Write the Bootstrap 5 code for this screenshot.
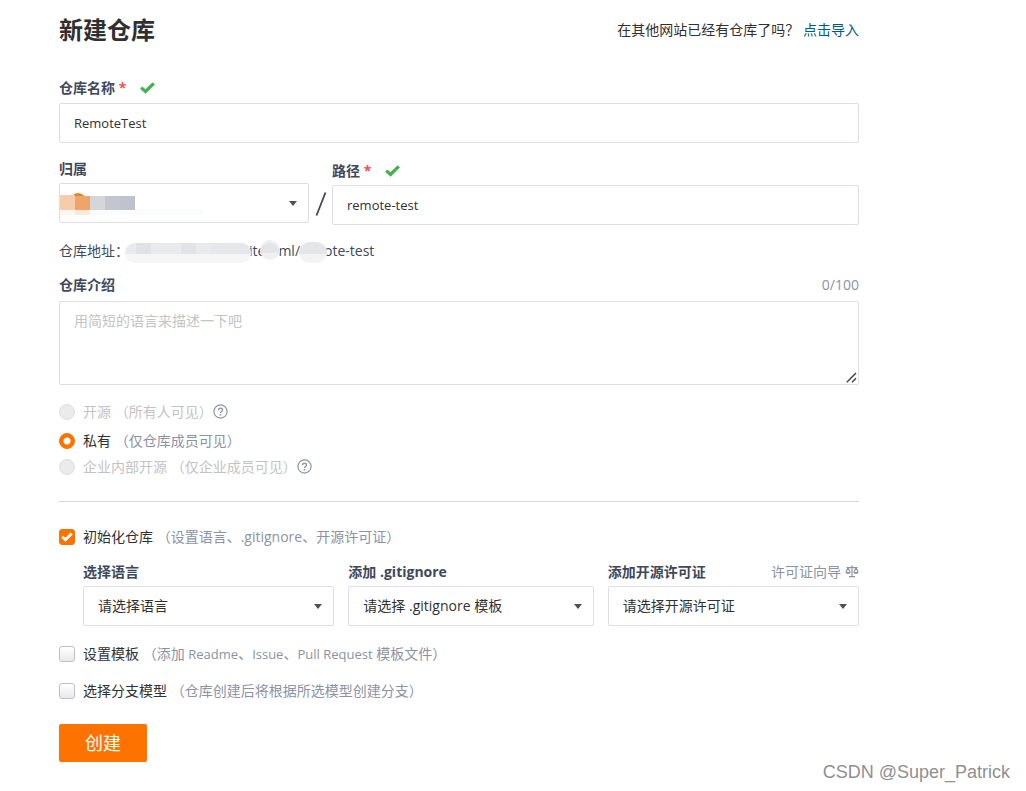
<!DOCTYPE html>
<html lang="zh-CN">
<head>
<meta charset="utf-8">
<meta name="viewport" content="width=device-width, initial-scale=1">
<title>新建仓库</title>
<link href="https://cdn.jsdelivr.net/npm/bootstrap@5.3.0/dist/css/bootstrap.min.css" rel="stylesheet">
<style>
  body { font-family: "Open Sans", "Noto Sans CJK SC", sans-serif; font-size: 14px; line-height: 20px; color: #303030; background: #fff; }
  .repo-page { max-width: 859px; padding: 14px 0 0 59px; }
  .page-title { font-size: 24px; line-height: 32px; font-weight: 700; color: #303030; }
  .import-link { color: #005980; }
  .field-label { font-weight: 700; color: #40485b; line-height: 20px; }
  .label-row { margin-bottom: 5px; }
  .required { color: #e65550; font-weight: 700; }
  .check-mark { margin-left: 14px; }
  .repo-page .form-control, .repo-page .form-select {
    font-size: 14px; line-height: 20px; color: #303030; border: 1px solid #dcdfe6; border-radius: 2px; padding: 9px 14px; height: 40px; }
  .repo-page input.form-control, .latin { font-size: 13px; }
  .repo-page .form-select { padding-right: 32px; background: #fff url("data:image/svg+xml,%3Csvg xmlns='http://www.w3.org/2000/svg' viewBox='0 0 8 5'%3E%3Cpath fill='%23505050' d='M0 0h8L4 5z'/%3E%3C/svg%3E") no-repeat right 11px center / 8px 5px; }
  .repo-page textarea.form-control { height: 84px; resize: none; }
  .repo-page .form-control::placeholder { color: #c3c3c3; }
  .owner-col { flex: 0 0 250px; }
  .path-col { padding-top: 2px; }
  .path-slash { width: 23px; color: #40485b; }
  .owner-mask { left: 0; top: 8px; }
  .resize-grip { right: 2px; bottom: 2px; }
  .address { color: #40485b; height: 24px; margin-top: 14px; }
  .address svg { position: relative; flex: none; margin-top: 4px; }
  .mask-host { margin: 0 -2px 0 -4px; }
  .mask-dot { margin: 0 -2px 0 -5px; top: -3px; }
  .mask-path { margin: 0 -3px 0 -1px; top: -1px; }
  .muted-note { color: #8c92a4; }
  .option-row { color: #303030; line-height: 20px; }
  .option-row.is-disabled { color: #c3c3c3; }
  .desc-head { margin: 12px 0 6px; }
  .vis-list { margin-top: 17px; }
  .vis-private { margin: 9px 0 6px; }
  .option-row .form-check-input { width: 16px; height: 16px; margin: 0 8px 0 0; flex: none; border: 1px solid #bfc0c3; box-shadow: none; }
  .option-row .form-check-input[type=checkbox] { border-radius: 3px; background-color: #fff; background-image: linear-gradient(#fff, #e8e9ec); background-size: cover; }
  .option-row .form-check-input[type=radio]:disabled { background-color: #ebebeb; border-color: #dedede; opacity: 1; }
  .option-row .form-check-input:disabled ~ label { opacity: 1; }
  .option-row .form-check-input:checked { background-color: #fe7300; border-color: #fe7300; }
  .option-row .form-check-input[type=radio]:checked { background-image: radial-gradient(circle, #fff 0 3px, #fe7300 4px); }
  .option-row .form-check-input[type=checkbox]:checked { background-color: #fe7300; background-image: url("data:image/svg+xml,%3Csvg xmlns='http://www.w3.org/2000/svg' viewBox='0 0 14 14'%3E%3Cpath fill='none' stroke='%23fff' stroke-width='2.8' d='M2.3 6.8l3.2 3L11.7 3.6'/%3E%3C/svg%3E"); }
  .section-rule { margin: 24px 0 25px; border-color: #d4d6da; opacity: 1; }
  .init-grid { display: grid; grid-template-columns: 251fr 245fr 251fr; gap: 14px; padding-left: 24px; margin: 15px 0 18px; }
  .branch-row { margin: 17px 0 23px; }
  .create-btn { width: 88px; height: 38px; padding: 0; font-size: 18px; line-height: 24px; border: 0; border-radius: 2px; color: #fff; background: #fe7300; }
  .create-btn:hover { color: #fff; background: #e56800; }
  .watermark { right: 16px; bottom: 7px; font-family: "Liberation Sans", sans-serif; font-size: 18px; line-height: 24px; color: #8f8f8f; }
</style>
</head>
<body class="position-relative min-vh-100">
<main class="repo-page">
  <form>
    <header class="d-flex justify-content-between align-items-center">
      <h1 class="page-title mb-0">新建仓库</h1>
      <div>在其他网站已经有仓库了吗？ <a href="#" class="import-link text-decoration-none">点击导入</a></div>
    </header>

    <div class="label-row d-flex align-items-center mt-4 pt-2">
      <label class="field-label" for="repoName">仓库名称 <span class="required">*</span></label>
      <svg class="check-mark" width="15" height="12" viewBox="0 0 15 12" aria-hidden="true"><path d="M1.2 5.6L5.5 9.5 13.8 1.4" fill="none" stroke="#45b04c" stroke-width="3.2"/></svg>
    </div>
    <input class="form-control" id="repoName" type="text" value="RemoteTest">

    <div class="d-flex mt-3">
      <div class="owner-col">
        <label class="field-label d-block mb-1" for="owner">归属</label>
        <div class="position-relative">
          <select class="form-select" id="owner"><option></option></select>
          <svg class="owner-mask position-absolute" width="160" height="26" viewBox="0 0 160 26" shape-rendering="crispEdges" aria-hidden="true">
            <rect x="1" y="18" width="143" height="6" fill="#fbfdfd"/>
            <circle cx="19" cy="11" r="9" fill="#e8832a" shape-rendering="auto"/>
            <rect x="1" y="4" width="15" height="15" fill="#f6cdaa"/><rect x="16" y="5" width="15" height="14" fill="#efa567"/>
            <rect x="1" y="19" width="15" height="5" fill="#fdf5ee"/><rect x="16" y="19" width="15" height="5" fill="#fbe9dc"/>
            <rect x="31" y="5" width="15" height="14" fill="#d5d6da"/><rect x="46" y="5" width="15" height="14" fill="#c3c6cf"/>
            <rect x="61" y="5" width="15" height="14" fill="#c0c3cd"/>
          </svg>
        </div>
      </div>
      <div class="path-slash text-center align-self-end"><svg class="mb-2" width="12" height="26" viewBox="0 0 12 26" role="img" aria-label="/"><path d="M1.5 24.5L10.500 1.500" stroke="#40485b" stroke-width="1.8"/></svg></div>
      <div class="path-col flex-fill">
        <div class="d-flex align-items-center mb-1">
          <label class="field-label" for="repoPath">路径 <span class="required">*</span></label>
          <svg class="check-mark" width="15" height="12" viewBox="0 0 15 12" aria-hidden="true"><path d="M1.2 5.6L5.5 9.5 13.8 1.4" fill="none" stroke="#45b04c" stroke-width="3.2"/></svg>
        </div>
        <input class="form-control" id="repoPath" type="text" value="remote-test">
      </div>
    </div>

    <div class="address d-flex align-items-center">
      <span>仓库地址：</span>
      <svg class="mask-host" width="126" height="20" viewBox="0 0 126 20" aria-hidden="true">
        <defs><clipPath id="blob"><rect width="126" height="20" rx="10"/></clipPath></defs>
        <g clip-path="url(#blob)"><rect width="126" height="20" fill="#f6f6f7"/><rect width="126" height="11" fill="#e9eaec"/><rect x="11" width="15" height="11" fill="#e1e2e6"/><rect x="56" width="15" height="11" fill="#e2e3e6"/><rect x="86" width="40" height="11" fill="#e6e7ea"/></g>
      </svg>
      <span>ite</span>
      <svg class="mask-dot" width="20" height="20" viewBox="0 0 20 20" aria-hidden="true"><circle cx="10" cy="10" r="10" fill="#f0f0f2"/><path d="M0 13a10 10 0 1 1 20 0z" fill="#e3e4e8"/></svg>
      <span>ml/</span>
      <svg class="mask-path" width="28" height="21" viewBox="0 0 28 21" aria-hidden="true"><rect width="28" height="21" rx="10" fill="#f3f3f4"/><path d="M0 12a12 12 0 0 1 11-12h6a11 11 0 0 1 11 12z" fill="#e5e6e9"/></svg>
      <span>ote-test</span>
    </div>

    <div class="desc-head d-flex justify-content-between">
      <label class="field-label" for="repoDesc">仓库介绍</label>
      <span class="muted-note">0/100</span>
    </div>
    <div class="position-relative">
      <textarea class="form-control" id="repoDesc" placeholder="用简短的语言来描述一下吧"></textarea>
      <svg class="resize-grip position-absolute" width="11" height="11" viewBox="0 0 11 11" aria-hidden="true"><path d="M.8 10.2L10 1M6 10.2L10 6.2" fill="none" stroke="#444" stroke-width="1.5"/></svg>
    </div>

    <div class="vis-list">
      <div class="option-row is-disabled d-flex align-items-center">
        <input class="form-check-input" type="radio" name="visibility" id="visPublic" disabled>
        <label for="visPublic">开源 （所有人可见）</label>
        <svg width="16" height="16" viewBox="0 0 16 16" aria-hidden="true" fill="none" stroke="#8c92a4"><circle cx="7.5" cy="7.5" r="6.6" stroke-width="1.2"/><path d="M5.6 6.2C5.6 3.5 9.5 3.5 9.5 6 9.5 7.5 7.5 7.4 7.5 9" stroke-width="1.4"/><path d="M7.5 10v1.5" stroke-width="1.6"/></svg>
      </div>
      <div class="option-row vis-private d-flex align-items-center">
        <input class="form-check-input" type="radio" name="visibility" id="visPrivate" checked>
        <label for="visPrivate">私有 <span class="muted-note">（仅仓库成员可见）</span></label>
      </div>
      <div class="option-row is-disabled d-flex align-items-center">
        <input class="form-check-input" type="radio" name="visibility" id="visInner" disabled>
        <label for="visInner">企业内部开源 （仅企业成员可见）</label>
        <svg width="16" height="16" viewBox="0 0 16 16" aria-hidden="true" fill="none" stroke="#8c92a4"><circle cx="7.5" cy="7.5" r="6.6" stroke-width="1.2"/><path d="M5.6 6.2C5.6 3.5 9.5 3.5 9.5 6 9.5 7.5 7.5 7.4 7.5 9" stroke-width="1.4"/><path d="M7.5 10v1.5" stroke-width="1.6"/></svg>
      </div>
    </div>

    <hr class="section-rule">

    <div class="option-row d-flex align-items-center">
      <input class="form-check-input" type="checkbox" id="initRepo" checked>
      <label for="initRepo">初始化仓库 <span class="muted-note">（设置语言、.gitignore、开源许可证）</span></label>
    </div>
    <div class="init-grid">
      <div>
        <label class="field-label d-block mb-1" for="lang">选择语言</label>
        <select class="form-select" id="lang"><option>请选择语言</option></select>
      </div>
      <div>
        <label class="field-label d-block mb-1" for="ignore">添加 .gitignore</label>
        <select class="form-select" id="ignore"><option>请选择 .gitignore 模板</option></select>
      </div>
      <div>
        <div class="d-flex justify-content-between mb-1">
          <label class="field-label" for="license">添加开源许可证</label>
          <a href="#" class="muted-note text-decoration-none d-flex align-items-center">许可证向导
            <svg class="ms-1" width="14" height="14" viewBox="0 0 14 14" aria-hidden="true" fill="none" stroke="#8c92a4" stroke-width="1.2"><path d="M7 .5v11M4 11.7h6M1.5 2.6h4L7 1.8l1.5.8h4M3 3L.9 7M3 3l2.1 4M11 3L8.9 7M11 3l2.1 4"/><path d="M.3 7h5.4c-.4 2.6-5 2.6-5.4 0zM8.3 7h5.4c-.4 2.6-5 2.6-5.4 0z" fill="#8c92a4" stroke="none"/></svg></a>
        </div>
        <select class="form-select" id="license"><option>请选择开源许可证</option></select>
      </div>
    </div>

    <div class="option-row d-flex align-items-center">
      <input class="form-check-input" type="checkbox" id="useTemplate">
      <label for="useTemplate">设置模板 <span class="muted-note">（添加 <span class="latin">Readme</span>、<span class="latin">Issue</span>、<span class="latin">Pull Request</span> 模板文件）</span></label>
    </div>
    <div class="option-row branch-row d-flex align-items-center">
      <input class="form-check-input" type="checkbox" id="branchModel">
      <label for="branchModel">选择分支模型 <span class="muted-note">（仓库创建后将根据所选模型创建分支）</span></label>
    </div>

    <button class="btn create-btn" type="button">创建</button>
  </form>
</main>
<div class="watermark position-absolute">CSDN @Super_Patrick</div>
<script src="https://cdn.jsdelivr.net/npm/bootstrap@5.3.0/dist/js/bootstrap.bundle.min.js"></script>
</body>
</html>
